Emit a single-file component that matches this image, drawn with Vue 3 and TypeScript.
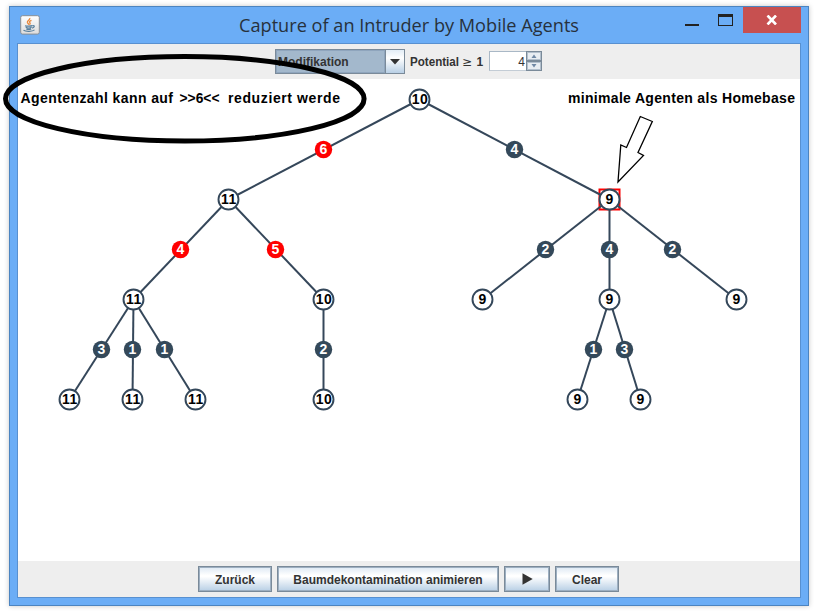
<script setup lang="ts">
interface TreeNode {
  x: number
  y: number
  agents: number
}
interface TreeEdge {
  from: number
  to: number
  weight: number
  x: number
  active?: boolean
}

const nodes: TreeNode[] = [
  { x: 419.5, y: 99.5, agents: 10 },
  { x: 228.5, y: 199.5, agents: 11 },
  { x: 609.5, y: 199.5, agents: 9 },
  { x: 133.5, y: 299.5, agents: 11 },
  { x: 323.5, y: 299.5, agents: 10 },
  { x: 482.5, y: 299.5, agents: 9 },
  { x: 609.5, y: 299.5, agents: 9 },
  { x: 736.5, y: 299.5, agents: 9 },
  { x: 69.5, y: 399.5, agents: 11 },
  { x: 132.5, y: 399.5, agents: 11 },
  { x: 195.5, y: 399.5, agents: 11 },
  { x: 323.5, y: 399.5, agents: 10 },
  { x: 577.5, y: 399.5, agents: 9 },
  { x: 640.5, y: 399.5, agents: 9 },
]

const edges: TreeEdge[] = [
  { from: 0, to: 1, weight: 6, x: 323.5, active: true },
  { from: 0, to: 2, weight: 4, x: 514.5 },
  { from: 1, to: 3, weight: 4, x: 180.5, active: true },
  { from: 1, to: 4, weight: 5, x: 275.5, active: true },
  { from: 2, to: 5, weight: 2, x: 545.5 },
  { from: 2, to: 6, weight: 4, x: 609.5 },
  { from: 2, to: 7, weight: 2, x: 672.5 },
  { from: 3, to: 8, weight: 3, x: 101.5 },
  { from: 3, to: 9, weight: 1, x: 132.5 },
  { from: 3, to: 10, weight: 1, x: 164.5 },
  { from: 4, to: 11, weight: 2, x: 323.5 },
  { from: 6, to: 12, weight: 1, x: 593.5 },
  { from: 6, to: 13, weight: 3, x: 624.5 },
]

const edgeY = (e: TreeEdge): number => (nodes[e.from].y + nodes[e.to].y) / 2
</script>

<template>
  <div class="desktop">
    <div class="window">
      <header class="titlebar">
        <svg class="java" width="20" height="20" viewBox="0 0 20 20">
          <defs>
            <linearGradient id="tile" x1="0" y1="0" x2="0" y2="1">
              <stop offset="0" stop-color="#ffffff" />
              <stop offset="1" stop-color="#dcdcdc" />
            </linearGradient>
          </defs>
          <rect x="0.700" y="0.700" width="18.600" height="18.400" rx="1.800" fill="url(#tile)" stroke="#8b8f94" />
          <path d="M9.800 3c.6 1.900-3 2.700-2.400 4.500.3.800 1.200 1.200 1.500 2.200M11.500 5.300c-2.300.9-2.300 1.700-1.500 2.600.5.700.1 1.200-.4 1.700" fill="none" stroke="#e8873a" stroke-width="1.300" />
          <path d="M5 10.700c1.700.7 5.700.6 7.300-.1M5.700 12.300c1.700.8 4.500.7 6 0M6.300 13.900c1.400.6 3.600.6 4.900 0M12.500 10.600c2.600-.5 2.300 1.900-.4 2.500M3.500 15.300c2.500 1.500 9 1.300 11-.4" fill="none" stroke="#587f9d" stroke-width="1.200" />
        </svg>
        <svg class="title" width="360" height="32" viewBox="0 0 360 32">
          <text x="5" y="22" textLength="340" lengthAdjust="spacingAndGlyphs">Capture of an Intruder by Mobile Agents</text>
        </svg>
        <div class="controls">
          <span class="minimize"></span>
          <span class="maximize"></span>
          <span class="close">
            <svg width="12" height="10" viewBox="0 0 12 10"><path d="M1.500.5l8.500 9M10 .5l-8.500 9" stroke="#fff" stroke-width="2.600" /></svg>
          </span>
        </div>
      </header>

      <main class="content">
        <div class="toolbar">
          <div class="combo">
            <span class="combo-value">Modifikation</span>
            <span class="combo-arrow">
              <svg width="10" height="6" viewBox="0 0 10 6"><path d="M0 0h10L5 5.500z" fill="#333" /></svg>
            </span>
          </div>
          <svg class="potential" width="78" height="20" viewBox="0 0 78 20">
            <text x="0" y="14" textLength="49" lengthAdjust="spacingAndGlyphs">Potential</text>
            <text class="relation" x="52" y="14">≥</text>
            <text x="66.500" y="14">1</text>
          </svg>
          <div class="spinner">
            <span class="spinner-value">4</span>
            <span class="spinner-buttons">
              <span class="step"><svg width="6" height="4" viewBox="0 0 6 4"><path d="M.5 4L3 .5 5.500 4z" fill="#7089a5" /></svg></span>
              <span class="step"><svg width="6" height="4" viewBox="0 0 6 4"><path d="M.5 0L3 3.500 5.500 0z" fill="#7089a5" /></svg></span>
            </span>
          </div>
        </div>

        <svg class="tree" width="782" height="482" viewBox="18 79 782 482">
          <rect x="599.500" y="189.500" width="20" height="20" fill="#fff" stroke="#f00" stroke-width="2" />
          <line
            v-for="(e, i) in edges"
            :key="'l' + i"
            :x1="nodes[e.from].x"
            :y1="nodes[e.from].y"
            :x2="nodes[e.to].x"
            :y2="nodes[e.to].y"
            class="edge"
          />
          <g v-for="(e, i) in edges" :key="'w' + i">
            <circle :cx="e.x" :cy="edgeY(e)" r="8.700" :class="e.active ? 'weight active' : 'weight'" />
            <text :x="e.x" :y="edgeY(e) + 4.500" class="weight-text">{{ e.weight }}</text>
          </g>
          <g v-for="(n, i) in nodes" :key="'n' + i">
            <circle :cx="n.x" :cy="n.y" r="10" class="node" />
            <text :x="n.x + (n.agents > 9 ? 0.5 : 0)" :y="n.y + 4.500" :class="n.agents > 9 ? 'node-text wide' : 'node-text'">{{ n.agents }}</text>
          </g>
          <text x="20.500" y="103" class="caption" textLength="152.500">Agentenzahl kann auf</text>
          <text x="179.500" y="103" class="caption" textLength="40" lengthAdjust="spacingAndGlyphs">&gt;&gt;6&lt;&lt;</text>
          <text x="228" y="103" class="caption" textLength="112">reduziert werde</text>
          <text x="568" y="103" class="caption" textLength="227">minimale Agenten als Homebase</text>
          <path d="M640.300 116.500L652.300 121.500 638 152.500 643.500 155.500 618 182 620.800 145 626.500 147.500z" fill="#fff" stroke="#000" stroke-width="1.300" />
        </svg>

        <div class="actions">
          <button class="btn back"><span>Zurück</span></button>
          <button class="btn animate"><span>Baumdekontamination animieren</span></button>
          <button class="btn play">
            <svg width="11" height="12" viewBox="0 0 11 12"><path d="M.5.300L10.700 6 .5 11.700z" fill="#333" /></svg>
          </button>
          <button class="btn clear"><span>Clear</span></button>
        </div>
      </main>
    </div>

    <svg class="marker" width="817" height="613" viewBox="0 0 817 613">
      <ellipse cx="184.800" cy="98.800" rx="179.300" ry="42.200" fill="none" stroke="#000" stroke-width="5" />
    </svg>
  </div>
</template>

<style>
body {
  margin: 0;
  background: #fff;
}
</style>

<style scoped>
.desktop {
  position: relative;
  box-sizing: border-box;
  width: 817px;
  height: 613px;
  padding: 6px 8px 7px 9px;
  overflow: hidden;
  background: #fff;
  font-family: "Liberation Sans", Arial, sans-serif;
}
.desktop svg {
  display: block;
}
.window {
  box-sizing: border-box;
  width: 800px;
  height: 600px;
  border: 1px solid #4c84c0;
  background: #6badf6;
  padding: 0 7px 7px;
  box-shadow: 0 0 5px rgba(0, 0, 0, 0.22);
}
.titlebar {
  display: flex;
  height: 36px;
}
.java {
  margin: 8px 0 0 3px;
}
.title {
  margin: 3px 0 0 194px;
}
.title text {
  font: 19px "Open Sans", "Noto Sans", sans-serif;
  fill: #27313c;
}
.controls {
  display: flex;
  margin-left: auto;
}
.minimize {
  width: 14px;
  height: 2px;
  margin: 17px 19px 0 0;
  background: #222;
}
.maximize {
  box-sizing: border-box;
  width: 15px;
  height: 12px;
  margin: 7px 10px 0 0;
  border: 1px solid #222;
  border-top-width: 3px;
}
.close {
  display: flex;
  align-items: center;
  justify-content: center;
  width: 58px;
  height: 26px;
  background: #c75050;
}
.content {
  box-sizing: border-box;
  width: 784px;
  height: 555px;
  border: 1px solid #5890d0;
  background: #eee;
}
.toolbar {
  display: flex;
  align-items: center;
  height: 35px;
  padding-left: 257px;
  color: #333;
  font-size: 12px;
  font-weight: bold;
}
.combo {
  box-sizing: border-box;
  display: flex;
  width: 130px;
  height: 25px;
  border: 1px solid #7a8a99;
  box-shadow: inset 0 0 0 1px #8fa5bd;
}
.combo-value {
  width: 107px;
  padding-left: 2px;
  line-height: 24px;
  background: #a3b8cc;
  box-shadow: inset 0 0 0 1px #8fa5bd;
}
.combo-arrow {
  display: flex;
  flex: 1;
  align-items: center;
  justify-content: center;
  border-left: 1px solid #7a8a99;
  background: linear-gradient(#e3edf6, #fff 35%, #b8cfe5);
}
.potential {
  margin-left: 5px;
}
.potential text {
  font: bold 12px "Liberation Sans", Arial, sans-serif;
  fill: #333;
}
.potential .relation {
  font-family: "DejaVu Sans", sans-serif;
  font-size: 12px;
  font-weight: normal;
}
.spinner {
  display: flex;
  width: 53px;
  height: 20px;
  margin: -1px 0 0 1px;
}
.spinner-value {
  box-sizing: border-box;
  width: 37px;
  padding-right: 1px;
  border: 1px solid #a9b8c6;
  border-right: 0;
  border-bottom-color: #c3ccd5;
  background: #fff;
  font-weight: normal;
  line-height: 20px;
  text-align: right;
}
.spinner-buttons {
  display: flex;
  flex: 1;
  flex-direction: column;
}
.step {
  box-sizing: border-box;
  display: flex;
  align-items: center;
  justify-content: center;
  height: 10px;
  border: 1px solid #7a8a99;
  background: #e8edf2;
  box-shadow: inset 0 0 0 1px #b3c0cd;
}
.tree {
  background: #fff;
}
.edge {
  stroke: #35475a;
  stroke-width: 2;
}
.weight {
  fill: #34495a;
}
.weight.active {
  fill: #f00;
}
.node {
  fill: #fff;
  stroke: #34475a;
  stroke-width: 1.9;
}
.node-text,
.weight-text {
  font: bold 14px "Liberation Sans", Arial, sans-serif;
  text-anchor: middle;
}
.wide {
  letter-spacing: 0.5px;
}
.weight-text {
  fill: #fff;
}
.caption {
  font: bold 14px "Liberation Sans", Arial, sans-serif;
  fill: #000;
}
.actions {
  display: flex;
  gap: 5px;
  height: 36px;
  box-sizing: border-box;
  padding: 5px 0 0 180px;
}
.btn {
  box-sizing: border-box;
  display: flex;
  align-items: center;
  justify-content: center;
  height: 26px;
  padding: 1px 0 0;
  border: 1px solid #7a8a99;
  border-radius: 0;
  background: linear-gradient(#dde8f3, #fff 35%, #fff 40%, #b8cfe5);
  box-shadow: inset 0 0 0 1px #9dafc1;
  color: #333;
  font: bold 12px "Liberation Sans", Arial, sans-serif;
  white-space: nowrap;
}
.back {
  width: 74px;
}
.animate {
  width: 222px;
}
.play {
  width: 46px;
  padding: 0 0 1px;
}
.clear {
  width: 64px;
}
.marker {
  position: absolute;
  top: 0;
  left: 0;
  pointer-events: none;
}
</style>
